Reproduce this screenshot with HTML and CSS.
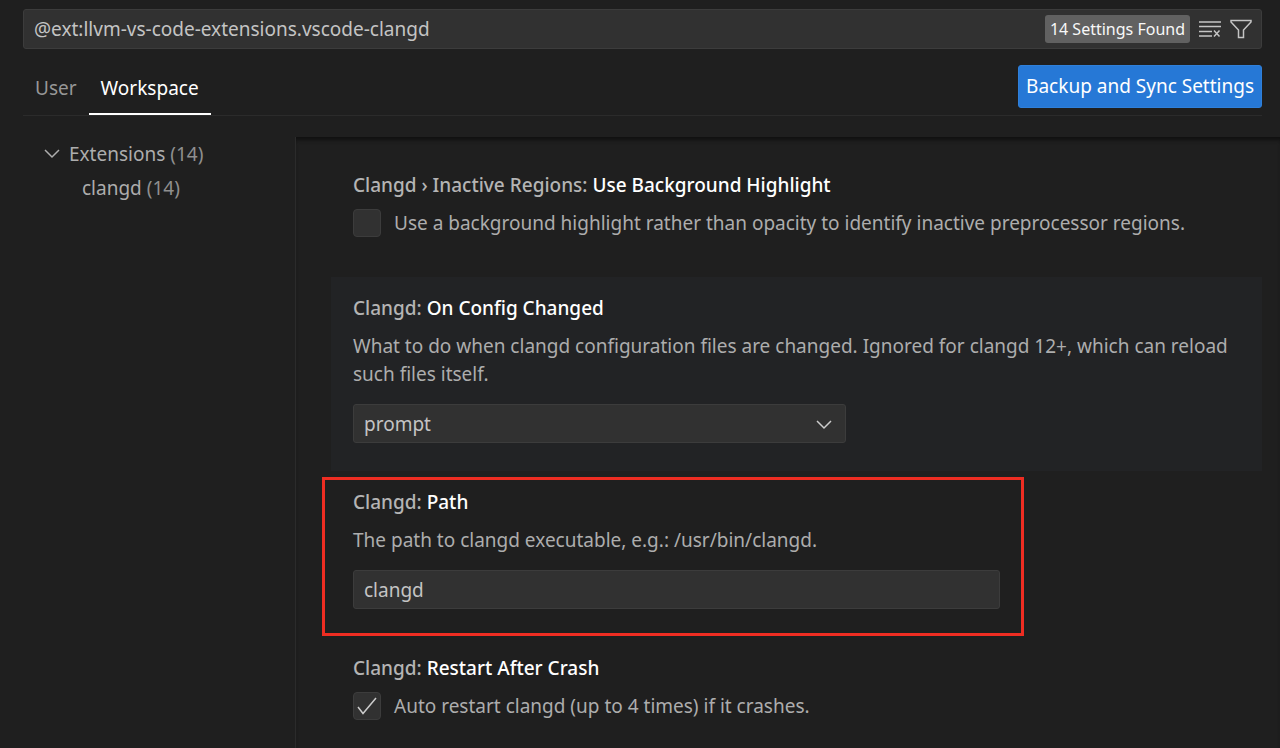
FILE: index.html
```html
<!DOCTYPE html>
<html lang="en">
  <head>
    <meta charset="utf-8">
    <meta name="viewport" content="width=device-width, initial-scale=1">
    <title>Settings</title>
    <link rel="stylesheet" href="styles.css">
  </head>
  <body>
    <header class="header">
      <div class="search">
        <input class="search-input" type="text" aria-label="Search settings" value="@ext:llvm-vs-code-extensions.vscode-clangd">
        <span class="count">14 Settings Found</span>
        <button class="icon-button" type="button" aria-label="Clear search">
          <svg width="24" height="20" viewBox="0 0 24 20" fill="none" stroke="currentColor" stroke-width="1.5">
            <path d="M1 3h22M1 7.5h22M1 12.5h13M1 17h13M16 11.5l5.5 6M21.5 11.5l-5.5 6"/>
          </svg>
        </button>
        <button class="icon-button" type="button" aria-label="Filter settings">
          <svg width="24" height="20" viewBox="0 0 24 20" fill="none" stroke="currentColor" stroke-width="1.5">
            <path d="M2 1.5h20v1.5l-7.5 8v7.5h-5v-7.5l-7.5-8z"/>
          </svg>
        </button>
      </div>
      <div class="toolbar">
        <nav class="tabs">
          <a class="tab" href="#user">User</a>
          <a class="tab active" href="#workspace">Workspace</a>
        </nav>
        <button class="sync-button" type="button">Backup and Sync Settings</button>
      </div>
    </header>
    <main class="body">
      <nav class="tree">
        <a class="tree-item" href="#extensions">
          <svg class="chevron" width="16" height="10" viewBox="0 0 16 10" fill="none" stroke="currentColor" stroke-width="1.5"><path d="M1 1l7 7l7-7"/></svg>
          <span>Extensions <span class="tree-count">(14)</span></span>
        </a>
        <a class="tree-item child" href="#clangd"><span>clangd <span class="tree-count">(14)</span></span></a>
      </nav>
      <div class="settings">
        <section class="setting">
          <h2 class="title"><span class="category">Clangd › Inactive Regions:</span> Use Background Highlight</h2>
          <div class="check-row">
            <input class="checkbox" id="highlight" type="checkbox">
            <label for="highlight">Use a background highlight rather than opacity to identify inactive preprocessor regions.</label>
          </div>
        </section>
        <section class="setting focused">
          <h2 class="title"><span class="category">Clangd:</span> On Config Changed</h2>
          <label class="description" for="config">What to do when clangd configuration files are changed. Ignored for clangd 12+, which can reload such files itself.</label>
          <div class="select-box">
            <select class="field" id="config">
              <option>prompt</option>
            </select>
            <svg class="select-arrow" width="16" height="10" viewBox="0 0 16 10" fill="none" stroke="currentColor" stroke-width="1.5"><path d="M1 1l7 7l7-7"/></svg>
          </div>
        </section>
        <section class="setting marked">
          <h2 class="title"><span class="category">Clangd:</span> Path</h2>
          <label class="description" for="path">The path to clangd executable, e.g.: /usr/bin/clangd.</label>
          <input class="field text-field" id="path" type="text" value="clangd">
        </section>
        <section class="setting">
          <h2 class="title"><span class="category">Clangd:</span> Restart After Crash</h2>
          <div class="check-row">
            <span class="check-box">
              <input class="checkbox" id="restart" type="checkbox" checked>
              <svg class="check-mark" width="20" height="18" viewBox="0 0 20 18" fill="none" stroke="currentColor" stroke-width="1.5"><path d="M1 10l5 6.5l13-15.5"/></svg>
            </span>
            <label for="restart">Auto restart clangd (up to 4 times) if it crashes.</label>
          </div>
        </section>
      </div>
    </main>
  </body>
</html>
```
FILE: styles.css
```css
*, *::after {
  box-sizing: border-box;
}

body {
  margin: 0;
  height: 100vh;
  overflow: hidden;
  display: flex;
  flex-direction: column;
  background: #1f1f1f;
  color: #adadad;
  font-family: "Noto Sans", sans-serif;
  font-size: 19px;
  line-height: 28px;
}

button, input, select {
  font: inherit;
  color: inherit;
}

a {
  color: inherit;
  text-decoration: none;
}

svg {
  display: block;
}

.header {
  padding: 9px 18px 0 23px;
}

.search {
  display: flex;
  align-items: center;
  height: 40px;
  padding: 0 8px 0 10px;
  background: #313131;
  border: 1px solid #3c3c3c;
  border-radius: 3px;
  color: #c4c4c4;
}

.search-input {
  flex: 1;
  min-width: 0;
  padding: 0;
  border: none;
  outline: none;
  background: none;
}

.count {
  padding: 0 5px;
  margin-right: 8px;
  border-radius: 3px;
  background: #616161;
  color: #f8f8f8;
  font-size: 16px;
}

.icon-button {
  padding: 0;
  border: none;
  background: none;
}

.icon-button + .icon-button {
  margin-left: 7px;
}

.toolbar {
  display: flex;
  justify-content: space-between;
  align-items: flex-end;
  height: 67px;
  border-bottom: 1px solid #2b2b2b;
}

.tabs {
  display: flex;
}

.tab {
  padding: 0 12px 11px;
  border-bottom: 2px solid transparent;
  color: #979797;
}

.tab.active {
  border-bottom-color: #ffffff;
  color: #ffffff;
}

.sync-button {
  height: 43px;
  margin-bottom: 7px;
  padding: 0 7px 2px;
  border: 1px solid #2f80da;
  border-radius: 3px;
  background: #2678d6;
  color: #ffffff;
}

.body {
  flex: 1;
  min-height: 0;
  display: flex;
  padding-top: 21px;
}

.tree {
  flex: 0 0 295px;
}

.tree-item {
  display: flex;
  align-items: center;
  gap: 9px;
  height: 34px;
  padding-left: 44px;
}

.tree-item.child {
  padding-left: 82px;
}

.tree-count {
  color: #8f8f8f;
}

.settings {
  flex: 1;
  min-width: 0;
  overflow: hidden;
  padding: 17px 18px 0 35px;
  border-left: 1px solid #2b2b2b;
  box-shadow: inset 0 5px 4px -2px #101010;
}

.setting {
  position: relative;
  padding: 17px 22px 28px;
}

.setting.focused {
  background: #222325;
}

/* red frame around the setting to change */
.setting.marked::after {
  content: "";
  position: absolute;
  top: 6px;
  bottom: 1px;
  left: -9px;
  width: 702px;
  border: 3px solid #ee2d22;
  pointer-events: none;
}

.title {
  margin: 0 0 10px;
  font-size: 19px;
  font-weight: 500;
  color: #ffffff;
}

.category {
  color: #b4b4b4;
}

.description {
  display: block;
  margin-bottom: 16px;
}

.field {
  display: block;
  width: 100%;
  height: 39px;
  padding: 0 10px;
  border: 1px solid #3c3c3c;
  border-radius: 3px;
  outline: none;
  background: #313131;
  color: #c4c4c4;
  appearance: none;
}

.text-field {
  max-width: 647px;
}

.select-box {
  position: relative;
  max-width: 493px;
}

.select-arrow {
  position: absolute;
  top: 16px;
  right: 14px;
  color: #cccccc;
  pointer-events: none;
}

.check-row {
  display: flex;
  gap: 13px;
  padding-bottom: 12px;
}

.check-box {
  position: relative;
  display: flex;
}

.checkbox {
  width: 28px;
  height: 28px;
  margin: 0;
  border: 1px solid #3c3c3c;
  border-radius: 4px;
  background: #313131;
  appearance: none;
}

.check-mark {
  position: absolute;
  top: 5px;
  left: 4px;
  color: #cccccc;
  pointer-events: none;
}
```
